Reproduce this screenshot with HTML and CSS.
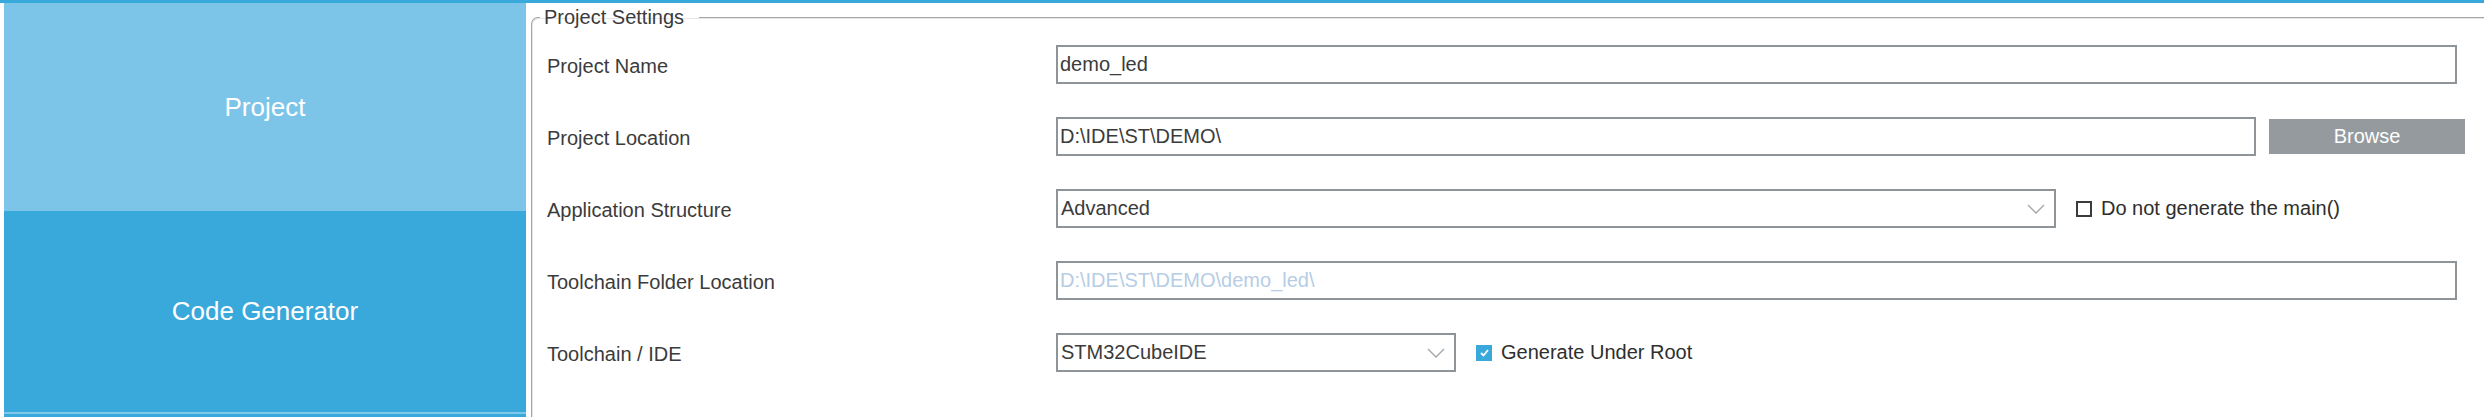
FILE: index.html
```html
<!DOCTYPE html>
<html lang="en">
<head>
  <meta charset="UTF-8" />
  <title>Project Manager</title>
  <link rel="stylesheet" href="styles.css">
</head>
<body>
  <div class="topbar"></div>
  <div class="app">
    <nav class="sidebar">
      <div class="nav-item selected">Project</div>
      <div class="nav-item">Code Generator</div>
      <div class="nav-item"></div>
    </nav>

    <main class="content">
      <fieldset class="settings">
        <legend>Project Settings</legend>
        <div class="form">
          <label>Project Name</label>
          <div class="row">
            <input class="text-field" type="text" value="demo_led" />
          </div>

          <label>Project Location</label>
          <div class="row row-wide">
            <input class="text-field" type="text" value="D:\IDE\ST\DEMO\" />
            <button class="browse">Browse</button>
          </div>

          <label>Application Structure</label>
          <div class="row">
            <div class="combo combo-long">
              <span>Advanced</span>
              <svg class="chevron" width="18" height="10" viewBox="0 0 18 10"><polyline points="1,1 9,9 17,1" /></svg>
            </div>
            <span class="check"></span>
            <span class="check-label">Do not generate the main()</span>
          </div>

          <label>Toolchain Folder Location</label>
          <div class="row">
            <input class="text-field" type="text" value="D:\IDE\ST\DEMO\demo_led\" disabled />
          </div>

          <label>Toolchain / IDE</label>
          <div class="row">
            <div class="combo combo-short">
              <span>STM32CubeIDE</span>
              <svg class="chevron" width="18" height="10" viewBox="0 0 18 10"><polyline points="1,1 9,9 17,1" /></svg>
            </div>
            <span class="check checked">
              <svg width="9" height="8" viewBox="0 0 9 8"><polyline points="1,4 3.5,6.5 8,1" /></svg>
            </span>
            <span class="check-label">Generate Under Root</span>
          </div>
        </div>
      </fieldset>
    </main>
  </div>
</body>
</html>
```

FILE: styles.css
```css
* {
  box-sizing: border-box;
}

html, body {
  margin: 0;
  height: 417px;
  overflow: hidden;
  background: #ffffff;
  font-family: 'Liberation Sans', Arial, sans-serif;
  color: #3b3b3b;
}

.topbar {
  height: 3px;
  background-color: #39a8da;
}

.app {
  display: flex;
  height: 414px;
}

.sidebar {
  width: 522px;
  margin-left: 4px;
  display: flex;
  flex-direction: column;
  background-color: #39a8da;
}

.nav-item {
  display: flex;
  justify-content: center;
  align-items: center;
  height: 201px;
  color: #ffffff;
  font-size: 26px;
  background-color: #39a8da;
}

.nav-item.selected {
  height: 208px;
  background-color: #7dc5e8;
}

.nav-item:last-child {
  height: 5px;
  border-top: 2px solid #7fc8ea;
}

.content {
  flex: 1;
  margin-left: 5px;
}

.settings {
  margin: 2px 0 0 0;
  padding: 0 27px 0 15px;
  height: 420px;
  border: 1px solid #a3a6a9;
  border-right: none;
  border-bottom: none;
  border-top-left-radius: 7px;
  box-shadow: inset 1px 1px 0 #e4e6e8;
}

.settings legend {
  margin-left: -7px;
  padding: 0 15px 0 4px;
  font-size: 20px;
  line-height: 24px;
  color: #3b3b3b;
}

.form {
  display: grid;
  grid-template-columns: 509px 1fr;
  grid-auto-rows: 39px;
  row-gap: 33px;
  padding-top: 16px;
  align-items: center;
}

.form label {
  font-size: 20px;
  padding-top: 3px;
}

.row {
  display: flex;
  align-items: center;
  height: 39px;
}

.row-wide {
  margin-right: -8px;
}

.text-field {
  flex: 1;
  height: 39px;
  padding: 0 2px;
  border: 2px solid #8f9498;
  font-family: inherit;
  font-size: 20px;
  color: #3b3b3b;
  background: #ffffff;
  outline: none;
}

.text-field:disabled {
  color: #b6cde5;
}

.browse {
  width: 196px;
  height: 35px;
  margin-left: 13px;
  border: none;
  background-color: #949a9e;
  color: #ffffff;
  font-family: inherit;
  font-size: 20px;
}

.combo {
  display: flex;
  align-items: center;
  justify-content: space-between;
  height: 39px;
  padding: 0 9px 0 3px;
  border: 2px solid #8f9498;
  font-size: 20px;
}

.combo-long {
  width: 1000px;
}

.combo-short {
  width: 400px;
}

.chevron polyline {
  fill: none;
  stroke: #a3a6a9;
  stroke-width: 1.4;
}

.check {
  display: flex;
  justify-content: center;
  align-items: center;
  width: 16px;
  height: 16px;
  margin-left: 20px;
  margin-right: 9px;
  border: 2px solid #3b3b3b;
}

.check.checked {
  border: none;
  background-color: #39a8da;
}

.check.checked polyline {
  fill: none;
  stroke: #ffffff;
  stroke-width: 1.8;
}

.check-label {
  font-size: 20px;
  color: #2e2e2e;
}
```
